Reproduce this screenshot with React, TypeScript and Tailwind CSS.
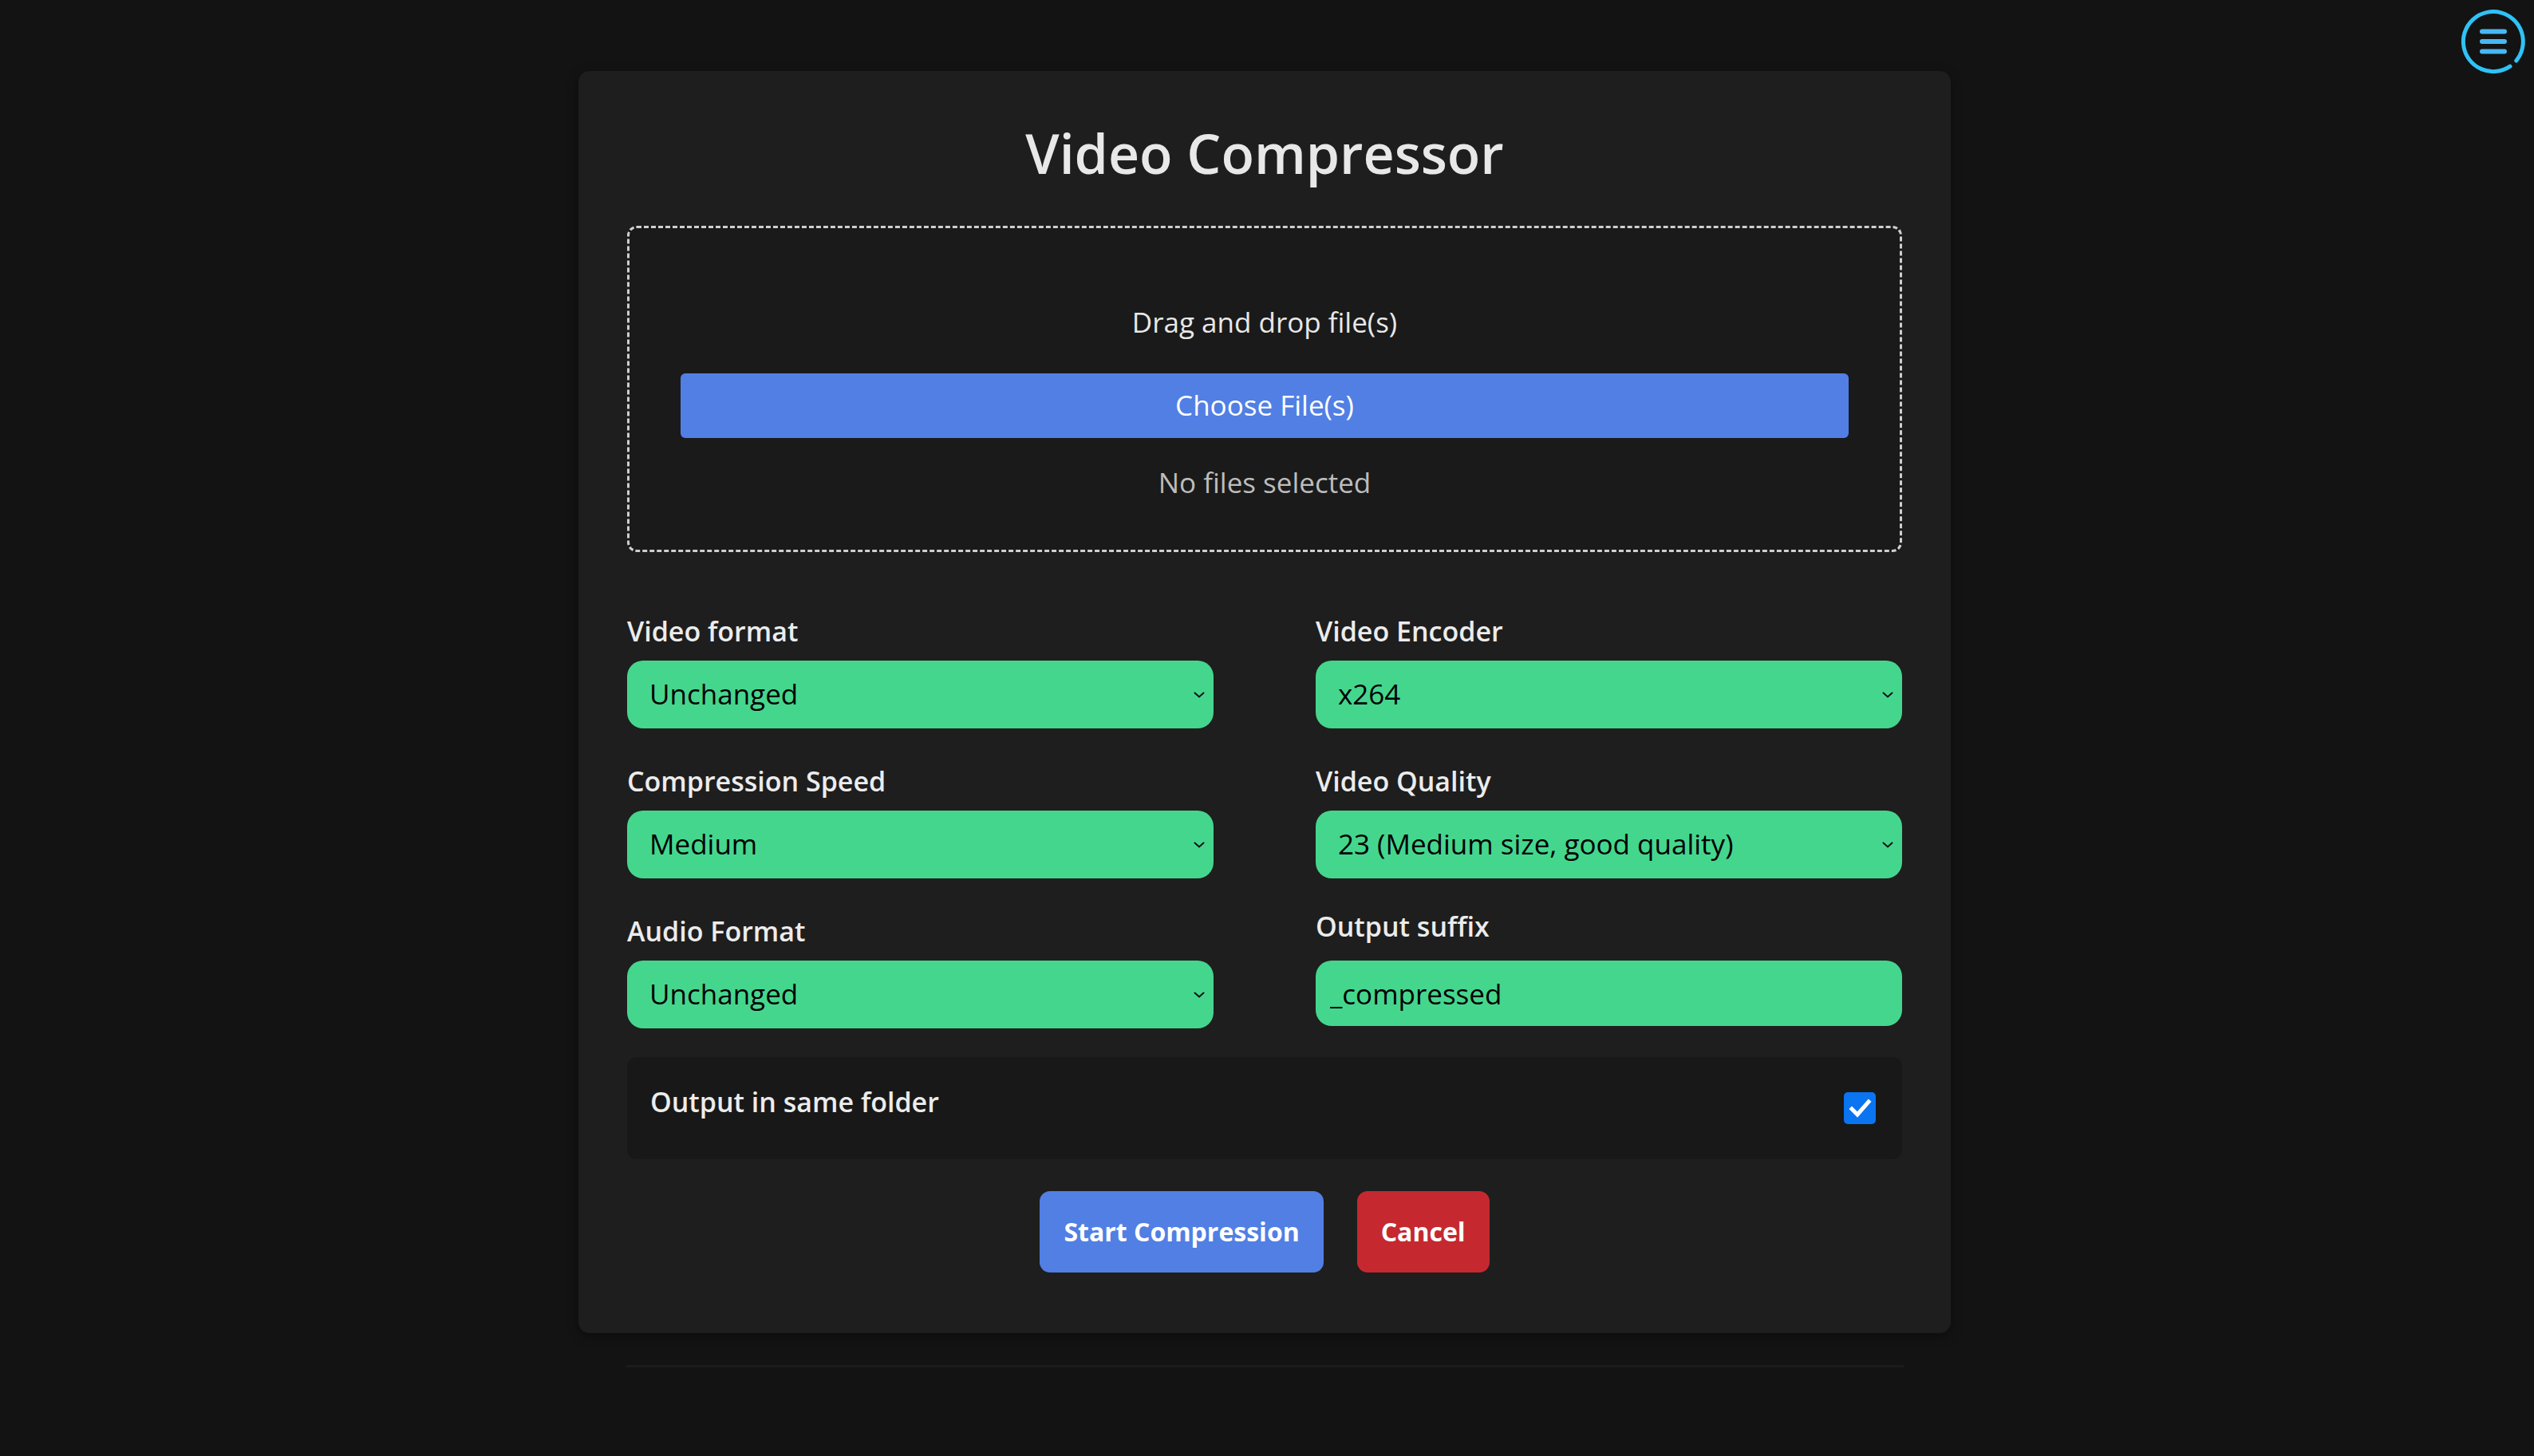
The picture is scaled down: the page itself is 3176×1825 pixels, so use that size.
import React, { useState } from "react";

const font = { fontFamily: '"Open Sans", "Noto Sans", sans-serif' };

function MenuIcon() {
  return (
    <button className="fixed right-[6px] top-[7px] w-[90px] h-[90px]" aria-label="Menu">
      <svg viewBox="0 0 90 90" width="90" height="90" fill="none">
        <path
          d="M66 76.1 A37.5 37.5 0 1 1 73.7 69.1"
          stroke="#2fc2f6"
          strokeWidth="5"
          strokeLinecap="round"
        />
        <path d="M31 32.5H59M31 45H59M31 57.5H59" stroke="#47b7f3" strokeWidth="6" strokeLinecap="round" />
      </svg>
    </button>
  );
}

function Chevron() {
  return (
    <svg
      className="pointer-events-none absolute right-[11px] top-1/2 -translate-y-1/2"
      width="14"
      height="8"
      viewBox="0 0 14 8"
      fill="none">
      <path d="M1.5 1.5L7 6.5L12.5 1.5" stroke="#111" strokeWidth="2" strokeLinecap="round" />
    </svg>
  );
}

function SelectField({ label, value, options }: { label: string; value: string; options: string[] }) {
  const [val, setVal] = useState(value);
  return (
    <div className="flex flex-col">
      <label className="text-[34px] leading-[48px] font-semibold text-[#ececec] mb-[13px]">{label}</label>
      <div className="relative">
        <select
          value={val}
          onChange={(e) => setVal(e.target.value)}
          className="appearance-none w-full h-[85px] rounded-[20px] bg-[#45d68e] text-black text-[35px] pl-[28px] pr-[40px] outline-none"
          style={font}>
          {options.map((o) => (
            <option key={o}>{o}</option>
          ))}
        </select>
        <Chevron />
      </div>
    </div>
  );
}

export default function App() {
  const [suffix, setSuffix] = useState("_compressed");
  const [sameFolder, setSameFolder] = useState(true);

  return (
    <div className="min-h-screen bg-[#131313] flex flex-col items-center pt-[89px] pr-[6px]" style={font}>
      <MenuIcon />
      <div className="w-[1720px] bg-[#1e1e1e] rounded-[14px] shadow-[0_4px_14px_rgba(0,0,0,0.35)] px-[61px] pt-[61px] pb-[76px]">
        <h1 className="text-center text-[68px] leading-[84px] font-semibold text-[#e8e8e8]">Video Compressor</h1>

        <div className="mt-[49px] border-[3px] border-dashed border-[#cfcfcf] rounded-[12px] bg-[#1a1a1a] px-[64px] pt-[94px] pb-[60px] flex flex-col items-center">
          <p className="text-[35px] leading-[48px] text-[#e8e8e8]">Drag and drop file(s)</p>
          <button className="mt-[40px] w-full h-[81px] rounded-[6px] bg-[#517fe4] text-white text-[35px]">
            Choose File(s)
          </button>
          <p className="mt-[32px] text-[35px] leading-[48px] text-[#bdbdbd]">No files selected</p>
        </div>

        <div className="mt-[75px] grid grid-cols-2 gap-x-[128px] gap-y-[42px]">
          <SelectField label="Video format" value="Unchanged" options={["Unchanged", "MP4", "MKV", "WebM", "MOV"]} />
          <SelectField label="Video Encoder" value="x264" options={["x264", "x265", "VP9", "AV1"]} />
          <SelectField label="Compression Speed" value="Medium" options={["Ultrafast", "Fast", "Medium", "Slow", "Veryslow"]} />
          <SelectField
            label="Video Quality"
            value="23 (Medium size, good quality)"
            options={["18 (Large size, best quality)", "23 (Medium size, good quality)", "28 (Small size, lower quality)"]}
          />
          <SelectField label="Audio Format" value="Unchanged" options={["Unchanged", "AAC", "MP3", "Opus", "None"]} />
          <div className="flex flex-col">
            <label className="text-[34px] leading-[48px] font-semibold text-[#ececec] mb-[19px] -mt-[6px]">Output suffix</label>
            <input
              value={suffix}
              onChange={(e) => setSuffix(e.target.value)}
              className="w-full h-[82px] rounded-[20px] bg-[#45d68e] text-black text-[35px] px-[18px] outline-none"
              style={font}
            />
          </div>
        </div>

        <div className="mt-[36px] h-[128px] rounded-[12px] bg-[#181818] px-[29px] pr-[33px] flex items-center justify-between">
          <span className="text-[34px] leading-[48px] font-semibold text-[#ececec] pb-[16px]">Output in same folder</span>
          <button
            onClick={() => setSameFolder(!sameFolder)}
            className={`w-[40px] h-[40px] rounded-[5px] flex items-center justify-center ${
              sameFolder ? "bg-[#0b74f0]" : "bg-white border-2 border-[#767676]"
            }`}>
            {sameFolder && (
              <svg width="30" height="30" viewBox="0 0 30 30" fill="none">
                <path d="M5 16L12 23L26 7" stroke="white" strokeWidth="5" strokeLinecap="square" />
              </svg>
            )}
          </button>
        </div>

        <div className="mt-[40px] flex justify-center gap-[42px]">
          <button className="h-[102px] px-[30px] rounded-[13px] bg-[#517fe4] text-white text-[32px] font-bold">
            Start Compression
          </button>
          <button className="h-[102px] px-[30px] rounded-[13px] bg-[#c5292f] text-white text-[32px] font-bold">
            Cancel
          </button>
        </div>
      </div>
      <div className="mt-[40px] w-[1603px] h-[3px] rounded bg-[#1b1b1b]" />
    </div>
  );
}
